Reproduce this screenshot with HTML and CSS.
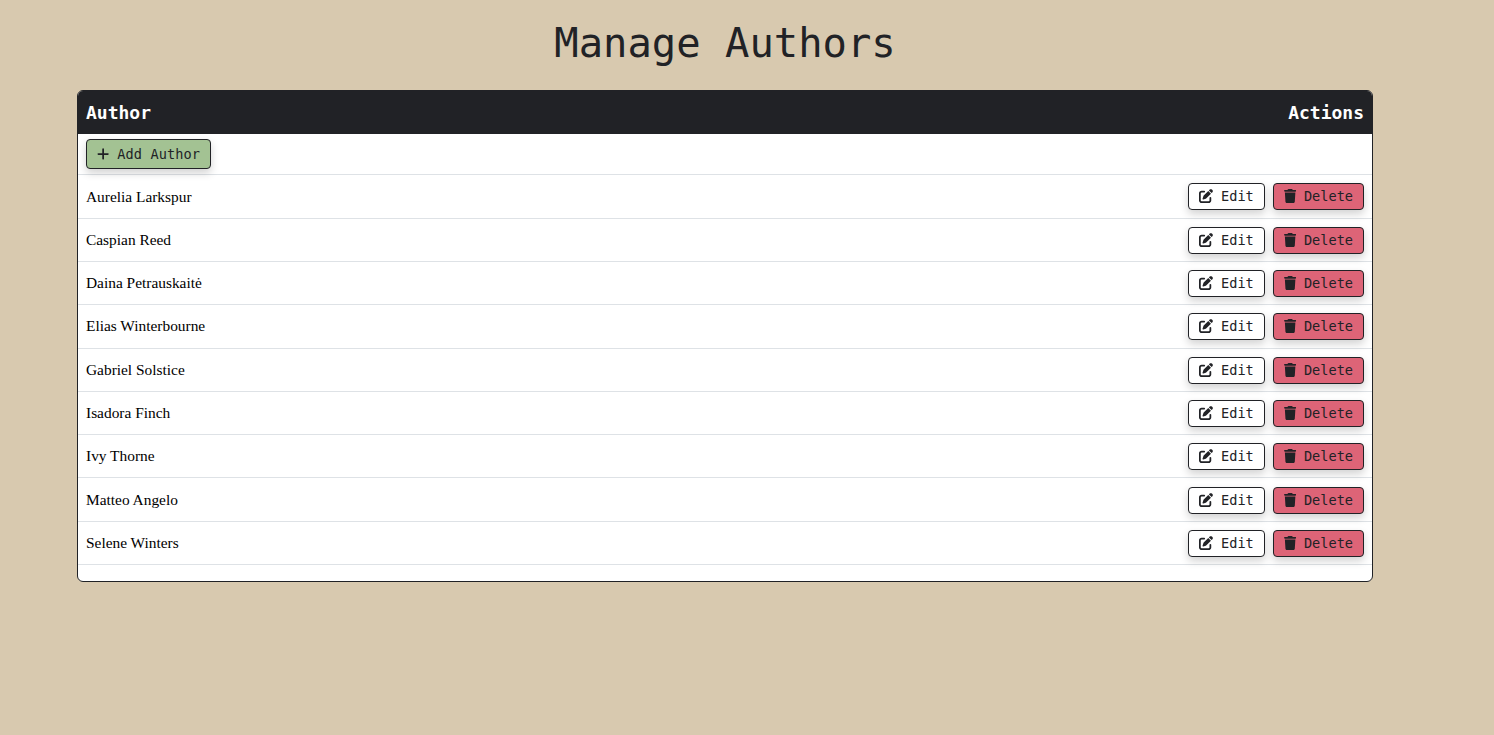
FILE: index.html
```html
<!DOCTYPE html>
<html lang="en">
<head>
    <meta charset="UTF-8">
    <title>Manage Authors</title>
    <link rel="stylesheet" href="styles.css">
</head>
<body>
    <main class="contentWrapper">
        <h1 class="pageTitle">Manage Authors</h1>
        <div class="tableCard">
            <table class="authorTable">
                <thead>
                    <tr>
                        <th class="colName">Author</th>
                        <th class="colActions">Actions</th>
                    </tr>
                </thead>
                <tbody>
                    <tr class="addRow">
                        <td colspan="2">
                            <button class="btn btnAdd"><svg class="icon" viewBox="0 0 448 512"><path d="M256 80c0-17.7-14.3-32-32-32s-32 14.3-32 32V224H48c-17.7 0-32 14.3-32 32s14.3 32 32 32H192V432c0 17.7 14.3 32 32 32s32-14.3 32-32V288H400c17.7 0 32-14.3 32-32s-14.3-32-32-32H256V80z"/></svg>Add Author</button>
                        </td>
                    </tr>
                    <tr>
                        <td>Aurelia Larkspur</td>
                        <td class="colActions">
                            <button class="btn btnEdit"><svg class="icon" viewBox="0 0 512 512"><path d="M471.6 21.7c-21.9-21.9-57.3-21.9-79.2 0L362.3 51.7l97.9 97.9 30.1-30.1c21.9-21.9 21.9-57.3 0-79.2L471.6 21.7zm-299.2 220c-6.1 6.1-10.8 13.6-13.5 21.9l-29.6 88.8c-2.9 8.6-.6 18.1 5.8 24.6s15.9 8.7 24.6 5.8l88.8-29.6c8.2-2.7 15.7-7.4 21.9-13.5L437.7 172.3 339.7 74.3 172.4 241.7zM96 64C43 64 0 107 0 160V416c0 53 43 96 96 96H352c53 0 96-43 96-96V320c0-17.7-14.3-32-32-32s-32 14.3-32 32v96c0 17.7-14.3 32-32 32H96c-17.7 0-32-14.3-32-32V160c0-17.7 14.3-32 32-32h96c17.7 0 32-14.3 32-32s-14.3-32-32-32H96z"/></svg>Edit</button>
                            <button class="btn btnDelete"><svg class="icon" viewBox="0 0 448 512"><path d="M135.2 17.7L128 32H32C14.3 32 0 46.3 0 64S14.3 96 32 96H416c17.7 0 32-14.3 32-32s-14.3-32-32-32H320l-7.2-14.3C307.4 6.8 296.3 0 284.2 0H163.8c-12.1 0-23.2 6.8-28.6 17.7zM416 128H32L53.2 467c1.6 25.3 22.6 45 47.9 45H346.9c25.3 0 46.3-19.7 47.9-45L416 128z"/></svg>Delete</button>
                        </td>
                    </tr>
                    <tr>
                        <td>Caspian Reed</td>
                        <td class="colActions">
                            <button class="btn btnEdit"><svg class="icon" viewBox="0 0 512 512"><path d="M471.6 21.7c-21.9-21.9-57.3-21.9-79.2 0L362.3 51.7l97.9 97.9 30.1-30.1c21.9-21.9 21.9-57.3 0-79.2L471.6 21.7zm-299.2 220c-6.1 6.1-10.8 13.6-13.5 21.9l-29.6 88.8c-2.9 8.6-.6 18.1 5.8 24.6s15.9 8.7 24.6 5.8l88.8-29.6c8.2-2.7 15.7-7.4 21.9-13.5L437.7 172.3 339.7 74.3 172.4 241.7zM96 64C43 64 0 107 0 160V416c0 53 43 96 96 96H352c53 0 96-43 96-96V320c0-17.7-14.3-32-32-32s-32 14.3-32 32v96c0 17.7-14.3 32-32 32H96c-17.7 0-32-14.3-32-32V160c0-17.7 14.3-32 32-32h96c17.7 0 32-14.3 32-32s-14.3-32-32-32H96z"/></svg>Edit</button>
                            <button class="btn btnDelete"><svg class="icon" viewBox="0 0 448 512"><path d="M135.2 17.7L128 32H32C14.3 32 0 46.3 0 64S14.3 96 32 96H416c17.7 0 32-14.3 32-32s-14.3-32-32-32H320l-7.2-14.3C307.4 6.8 296.3 0 284.2 0H163.8c-12.1 0-23.2 6.8-28.6 17.7zM416 128H32L53.2 467c1.6 25.3 22.6 45 47.9 45H346.9c25.3 0 46.3-19.7 47.9-45L416 128z"/></svg>Delete</button>
                        </td>
                    </tr>
                    <tr>
                        <td>Daina Petrauskaitė</td>
                        <td class="colActions">
                            <button class="btn btnEdit"><svg class="icon" viewBox="0 0 512 512"><path d="M471.6 21.7c-21.9-21.9-57.3-21.9-79.2 0L362.3 51.7l97.9 97.9 30.1-30.1c21.9-21.9 21.9-57.3 0-79.2L471.6 21.7zm-299.2 220c-6.1 6.1-10.8 13.6-13.5 21.9l-29.6 88.8c-2.9 8.6-.6 18.1 5.8 24.6s15.9 8.7 24.6 5.8l88.8-29.6c8.2-2.7 15.7-7.4 21.9-13.5L437.7 172.3 339.7 74.3 172.4 241.7zM96 64C43 64 0 107 0 160V416c0 53 43 96 96 96H352c53 0 96-43 96-96V320c0-17.7-14.3-32-32-32s-32 14.3-32 32v96c0 17.7-14.3 32-32 32H96c-17.7 0-32-14.3-32-32V160c0-17.7 14.3-32 32-32h96c17.7 0 32-14.3 32-32s-14.3-32-32-32H96z"/></svg>Edit</button>
                            <button class="btn btnDelete"><svg class="icon" viewBox="0 0 448 512"><path d="M135.2 17.7L128 32H32C14.3 32 0 46.3 0 64S14.3 96 32 96H416c17.7 0 32-14.3 32-32s-14.3-32-32-32H320l-7.2-14.3C307.4 6.8 296.3 0 284.2 0H163.8c-12.1 0-23.2 6.8-28.6 17.7zM416 128H32L53.2 467c1.6 25.3 22.6 45 47.9 45H346.9c25.3 0 46.3-19.7 47.9-45L416 128z"/></svg>Delete</button>
                        </td>
                    </tr>
                    <tr>
                        <td>Elias Winterbourne</td>
                        <td class="colActions">
                            <button class="btn btnEdit"><svg class="icon" viewBox="0 0 512 512"><path d="M471.6 21.7c-21.9-21.9-57.3-21.9-79.2 0L362.3 51.7l97.9 97.9 30.1-30.1c21.9-21.9 21.9-57.3 0-79.2L471.6 21.7zm-299.2 220c-6.1 6.1-10.8 13.6-13.5 21.9l-29.6 88.8c-2.9 8.6-.6 18.1 5.8 24.6s15.9 8.7 24.6 5.8l88.8-29.6c8.2-2.7 15.7-7.4 21.9-13.5L437.7 172.3 339.7 74.3 172.4 241.7zM96 64C43 64 0 107 0 160V416c0 53 43 96 96 96H352c53 0 96-43 96-96V320c0-17.7-14.3-32-32-32s-32 14.3-32 32v96c0 17.7-14.3 32-32 32H96c-17.7 0-32-14.3-32-32V160c0-17.7 14.3-32 32-32h96c17.7 0 32-14.3 32-32s-14.3-32-32-32H96z"/></svg>Edit</button>
                            <button class="btn btnDelete"><svg class="icon" viewBox="0 0 448 512"><path d="M135.2 17.7L128 32H32C14.3 32 0 46.3 0 64S14.3 96 32 96H416c17.7 0 32-14.3 32-32s-14.3-32-32-32H320l-7.2-14.3C307.4 6.8 296.3 0 284.2 0H163.8c-12.1 0-23.2 6.8-28.6 17.7zM416 128H32L53.2 467c1.6 25.3 22.6 45 47.9 45H346.9c25.3 0 46.3-19.7 47.9-45L416 128z"/></svg>Delete</button>
                        </td>
                    </tr>
                    <tr>
                        <td>Gabriel Solstice</td>
                        <td class="colActions">
                            <button class="btn btnEdit"><svg class="icon" viewBox="0 0 512 512"><path d="M471.6 21.7c-21.9-21.9-57.3-21.9-79.2 0L362.3 51.7l97.9 97.9 30.1-30.1c21.9-21.9 21.9-57.3 0-79.2L471.6 21.7zm-299.2 220c-6.1 6.1-10.8 13.6-13.5 21.9l-29.6 88.8c-2.9 8.6-.6 18.1 5.8 24.6s15.9 8.7 24.6 5.8l88.8-29.6c8.2-2.7 15.7-7.4 21.9-13.5L437.7 172.3 339.7 74.3 172.4 241.7zM96 64C43 64 0 107 0 160V416c0 53 43 96 96 96H352c53 0 96-43 96-96V320c0-17.7-14.3-32-32-32s-32 14.3-32 32v96c0 17.7-14.3 32-32 32H96c-17.7 0-32-14.3-32-32V160c0-17.7 14.3-32 32-32h96c17.7 0 32-14.3 32-32s-14.3-32-32-32H96z"/></svg>Edit</button>
                            <button class="btn btnDelete"><svg class="icon" viewBox="0 0 448 512"><path d="M135.2 17.7L128 32H32C14.3 32 0 46.3 0 64S14.3 96 32 96H416c17.7 0 32-14.3 32-32s-14.3-32-32-32H320l-7.2-14.3C307.4 6.8 296.3 0 284.2 0H163.8c-12.1 0-23.2 6.8-28.6 17.7zM416 128H32L53.2 467c1.6 25.3 22.6 45 47.9 45H346.9c25.3 0 46.3-19.7 47.9-45L416 128z"/></svg>Delete</button>
                        </td>
                    </tr>
                    <tr>
                        <td>Isadora Finch</td>
                        <td class="colActions">
                            <button class="btn btnEdit"><svg class="icon" viewBox="0 0 512 512"><path d="M471.6 21.7c-21.9-21.9-57.3-21.9-79.2 0L362.3 51.7l97.9 97.9 30.1-30.1c21.9-21.9 21.9-57.3 0-79.2L471.6 21.7zm-299.2 220c-6.1 6.1-10.8 13.6-13.5 21.9l-29.6 88.8c-2.9 8.6-.6 18.1 5.8 24.6s15.9 8.7 24.6 5.8l88.8-29.6c8.2-2.7 15.7-7.4 21.9-13.5L437.7 172.3 339.7 74.3 172.4 241.7zM96 64C43 64 0 107 0 160V416c0 53 43 96 96 96H352c53 0 96-43 96-96V320c0-17.7-14.3-32-32-32s-32 14.3-32 32v96c0 17.7-14.3 32-32 32H96c-17.7 0-32-14.3-32-32V160c0-17.7 14.3-32 32-32h96c17.7 0 32-14.3 32-32s-14.3-32-32-32H96z"/></svg>Edit</button>
                            <button class="btn btnDelete"><svg class="icon" viewBox="0 0 448 512"><path d="M135.2 17.7L128 32H32C14.3 32 0 46.3 0 64S14.3 96 32 96H416c17.7 0 32-14.3 32-32s-14.3-32-32-32H320l-7.2-14.3C307.4 6.8 296.3 0 284.2 0H163.8c-12.1 0-23.2 6.8-28.6 17.7zM416 128H32L53.2 467c1.6 25.3 22.6 45 47.9 45H346.9c25.3 0 46.3-19.7 47.9-45L416 128z"/></svg>Delete</button>
                        </td>
                    </tr>
                    <tr>
                        <td>Ivy Thorne</td>
                        <td class="colActions">
                            <button class="btn btnEdit"><svg class="icon" viewBox="0 0 512 512"><path d="M471.6 21.7c-21.9-21.9-57.3-21.9-79.2 0L362.3 51.7l97.9 97.9 30.1-30.1c21.9-21.9 21.9-57.3 0-79.2L471.6 21.7zm-299.2 220c-6.1 6.1-10.8 13.6-13.5 21.9l-29.6 88.8c-2.9 8.6-.6 18.1 5.8 24.6s15.9 8.7 24.6 5.8l88.8-29.6c8.2-2.7 15.7-7.4 21.9-13.5L437.7 172.3 339.7 74.3 172.4 241.7zM96 64C43 64 0 107 0 160V416c0 53 43 96 96 96H352c53 0 96-43 96-96V320c0-17.7-14.3-32-32-32s-32 14.3-32 32v96c0 17.7-14.3 32-32 32H96c-17.7 0-32-14.3-32-32V160c0-17.7 14.3-32 32-32h96c17.7 0 32-14.3 32-32s-14.3-32-32-32H96z"/></svg>Edit</button>
                            <button class="btn btnDelete"><svg class="icon" viewBox="0 0 448 512"><path d="M135.2 17.7L128 32H32C14.3 32 0 46.3 0 64S14.3 96 32 96H416c17.7 0 32-14.3 32-32s-14.3-32-32-32H320l-7.2-14.3C307.4 6.8 296.3 0 284.2 0H163.8c-12.1 0-23.2 6.8-28.6 17.7zM416 128H32L53.2 467c1.6 25.3 22.6 45 47.9 45H346.9c25.3 0 46.3-19.7 47.9-45L416 128z"/></svg>Delete</button>
                        </td>
                    </tr>
                    <tr>
                        <td>Matteo Angelo</td>
                        <td class="colActions">
                            <button class="btn btnEdit"><svg class="icon" viewBox="0 0 512 512"><path d="M471.6 21.7c-21.9-21.9-57.3-21.9-79.2 0L362.3 51.7l97.9 97.9 30.1-30.1c21.9-21.9 21.9-57.3 0-79.2L471.6 21.7zm-299.2 220c-6.1 6.1-10.8 13.6-13.5 21.9l-29.6 88.8c-2.9 8.6-.6 18.1 5.8 24.6s15.9 8.7 24.6 5.8l88.8-29.6c8.2-2.7 15.7-7.4 21.9-13.5L437.7 172.3 339.7 74.3 172.4 241.7zM96 64C43 64 0 107 0 160V416c0 53 43 96 96 96H352c53 0 96-43 96-96V320c0-17.7-14.3-32-32-32s-32 14.3-32 32v96c0 17.7-14.3 32-32 32H96c-17.7 0-32-14.3-32-32V160c0-17.7 14.3-32 32-32h96c17.7 0 32-14.3 32-32s-14.3-32-32-32H96z"/></svg>Edit</button>
                            <button class="btn btnDelete"><svg class="icon" viewBox="0 0 448 512"><path d="M135.2 17.7L128 32H32C14.3 32 0 46.3 0 64S14.3 96 32 96H416c17.7 0 32-14.3 32-32s-14.3-32-32-32H320l-7.2-14.3C307.4 6.8 296.3 0 284.2 0H163.8c-12.1 0-23.2 6.8-28.6 17.7zM416 128H32L53.2 467c1.6 25.3 22.6 45 47.9 45H346.9c25.3 0 46.3-19.7 47.9-45L416 128z"/></svg>Delete</button>
                        </td>
                    </tr>
                    <tr>
                        <td>Selene Winters</td>
                        <td class="colActions">
                            <button class="btn btnEdit"><svg class="icon" viewBox="0 0 512 512"><path d="M471.6 21.7c-21.9-21.9-57.3-21.9-79.2 0L362.3 51.7l97.9 97.9 30.1-30.1c21.9-21.9 21.9-57.3 0-79.2L471.6 21.7zm-299.2 220c-6.1 6.1-10.8 13.6-13.5 21.9l-29.6 88.8c-2.9 8.6-.6 18.1 5.8 24.6s15.9 8.7 24.6 5.8l88.8-29.6c8.2-2.7 15.7-7.4 21.9-13.5L437.7 172.3 339.7 74.3 172.4 241.7zM96 64C43 64 0 107 0 160V416c0 53 43 96 96 96H352c53 0 96-43 96-96V320c0-17.7-14.3-32-32-32s-32 14.3-32 32v96c0 17.7-14.3 32-32 32H96c-17.7 0-32-14.3-32-32V160c0-17.7 14.3-32 32-32h96c17.7 0 32-14.3 32-32s-14.3-32-32-32H96z"/></svg>Edit</button>
                            <button class="btn btnDelete"><svg class="icon" viewBox="0 0 448 512"><path d="M135.2 17.7L128 32H32C14.3 32 0 46.3 0 64S14.3 96 32 96H416c17.7 0 32-14.3 32-32s-14.3-32-32-32H320l-7.2-14.3C307.4 6.8 296.3 0 284.2 0H163.8c-12.1 0-23.2 6.8-28.6 17.7zM416 128H32L53.2 467c1.6 25.3 22.6 45 47.9 45H346.9c25.3 0 46.3-19.7 47.9-45L416 128z"/></svg>Delete</button>
                        </td>
                    </tr>
                </tbody>
            </table>
        </div>
    </main>
</body>
</html>
```
FILE: styles.css
```css
* {
    box-sizing: border-box;
}

html, body {
    height: 100%;
}

body {
    margin: 0;
    background-color: #d8c9af;
    color: #000000;
    overflow: hidden;
}

.contentWrapper {
    width: 1296px;
    margin-left: 77px;
}

.pageTitle {
    margin: 0;
    padding-top: 18px;
    height: 90px;
    font-family: "DejaVu Sans Mono", monospace;
    font-size: 40.5px;
    font-weight: 400;
    line-height: 50px;
    text-align: center;
    color: #212226;
}

.tableCard {
    background-color: white;
    border: 1px solid #212226;
    border-radius: 6px;
    overflow: hidden;
    height: 492px;
}

.authorTable {
    width: 100%;
    border-collapse: collapse;
    font-family: "Liberation Serif", serif;
    font-size: 15.4px;
}

.authorTable th {
    height: 43px;
    padding: 0 8px;
    background-color: #212226;
    color: white;
    font-family: "DejaVu Sans Mono", monospace;
    font-size: 18px;
    font-weight: 700;
}

.colName {
    text-align: left;
}

.authorTable th.colActions,
.authorTable td.colActions {
    text-align: right;
}

.authorTable td {
    height: 43.3px;
    padding: 0 8px;
    border-bottom: 1px solid #dee2e6;
    vertical-align: middle;
}

.authorTable td.colActions {
    padding-top: 0.8px;
}

.authorTable .addRow td {
    height: 40.9px;
}

.btn {
    display: inline-flex;
    align-items: center;
    height: 27px;
    padding: 0 10px 1px;
    border: 1px solid #212226;
    border-radius: 4px;
    font-family: "DejaVu Sans Mono", monospace;
    font-size: 13.6px;
    color: #212226;
    box-shadow: 0 4px 8px rgba(0, 0, 0, 0.18);
    vertical-align: middle;
    cursor: pointer;
}

.icon {
    height: 14px;
    flex-shrink: 0;
    margin-right: 8px;
    fill: #212226;
}

.btnAdd {
    height: 30px;
    letter-spacing: 0.1px;
    background-color: #a3c293;
}

.btnEdit {
    background-color: white;
}

.btnDelete {
    margin-left: 4px;
    background-color: #dd6477;
}
```
